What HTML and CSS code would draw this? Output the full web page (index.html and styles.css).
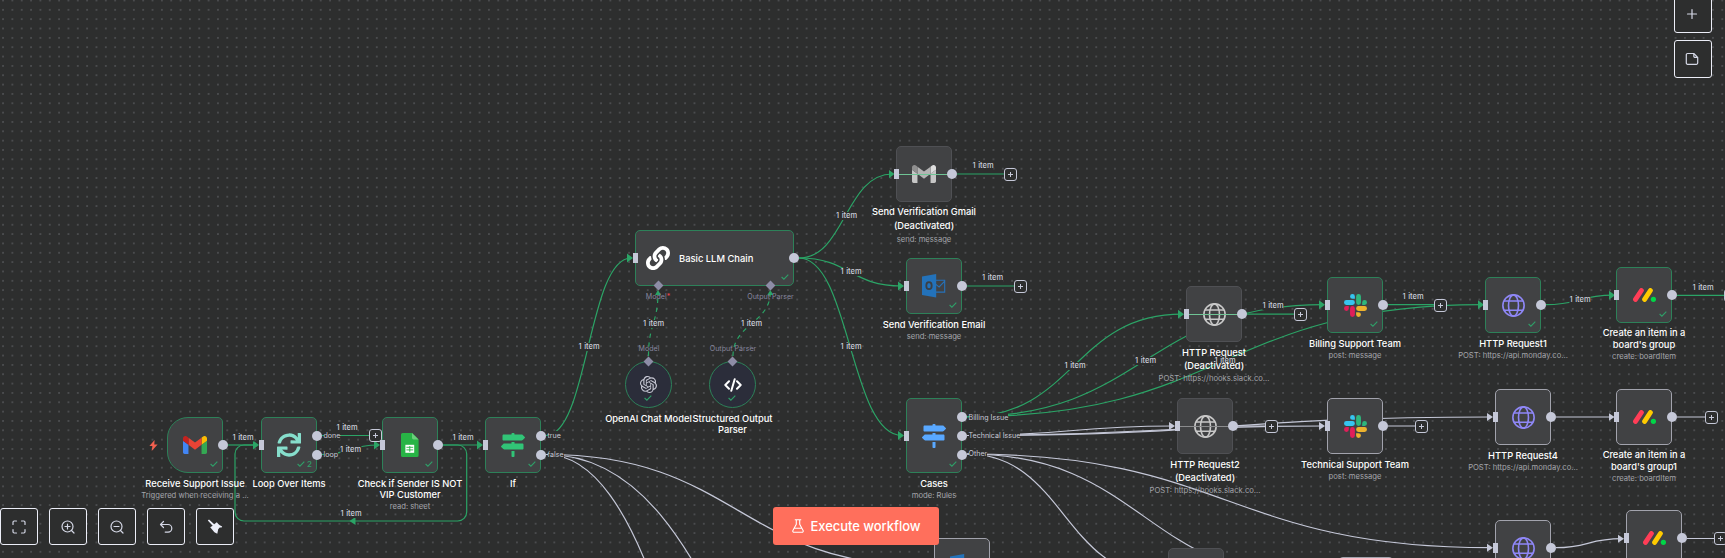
FILE: index.html
```html
<!DOCTYPE html>
<html lang="en">
<head>
<meta charset="utf-8">
<title>Support workflow</title>
<link rel="stylesheet" href="styles.css">
</head>
<body>
<svg class="defs" aria-hidden="true">
  <defs>
    <marker id="arrow-green" viewBox="0 0 6 10" refX="4" refY="5" markerWidth="6" markerHeight="10" markerUnits="userSpaceOnUse" orient="auto"><path d="M0 .5 6 5 0 9.5z" fill="#2ba466"/></marker>
    <marker id="arrow-grey" viewBox="0 0 6 10" refX="4" refY="5" markerWidth="6" markerHeight="10" markerUnits="userSpaceOnUse" orient="auto"><path d="M0 1 6 5 0 9z" fill="#c5c8d8"/></marker>
  </defs>
  <symbol id="gmail" viewBox="52 42 88 66"><path fill="#4285f4" d="M58 108h14V74L52 59v43c0 3.32 2.69 6 6 6"/><path fill="#34a853" d="M120 108h14c3.32 0 6-2.69 6-6V59l-20 15"/><path fill="#fbbc04" d="M120 48v26l20-15v-8c0-7.42-8.47-11.65-14.4-7.2"/><path fill="#ea4335" d="M72 74V48l24 18 24-18v26L96 92"/><path fill="#c5221f" d="M52 51v8l20 15V48l-5.6-4.2c-5.94-4.45-14.4-.22-14.4 7.2"/></symbol>
  <symbol id="gmail-mono" viewBox="52 42 88 66"><path fill="#c6c6c6" d="M58 108h14V74L52 59v43c0 3.32 2.69 6 6 6M120 108h14c3.32 0 6-2.69 6-6V59l-20 15"/><path fill="#dedede" d="M120 48v26l20-15v-8c0-7.42-8.47-11.65-14.4-7.2"/><path fill="#b4b4b4" d="M72 74V48l24 18 24-18v26L96 92"/><path fill="#8f8f8f" d="M52 51v8l20 15V48l-5.6-4.2c-5.94-4.45-14.4-.22-14.4 7.2"/></symbol>
  <symbol id="sync" viewBox="0 0 512 512"><path fill="currentColor" d="M440.65 12.57l4 82.77A247.16 247.16 0 0 0 255.83 8C134.73 8 33.91 94.92 12.29 209.82A12 12 0 0 0 24.09 224h49.05a12 12 0 0 0 11.67-9.26 175.91 175.91 0 0 1 317-56.94l-101.46-4.86a12 12 0 0 0-12.57 12v47.41a12 12 0 0 0 12 12H500a12 12 0 0 0 12-12V12a12 12 0 0 0-12-12h-47.37a12 12 0 0 0-11.98 12.57zM255.83 432a175.61 175.61 0 0 1-146-77.8l101.8 4.87a12 12 0 0 0 12.57-12v-47.4a12 12 0 0 0-12-12H12a12 12 0 0 0-12 12V500a12 12 0 0 0 12 12h47.35a12 12 0 0 0 12-12.6l-4.15-82.57A247.17 247.17 0 0 0 255.83 504c121.11 0 221.93-86.92 243.55-201.82a12 12 0 0 0-11.8-14.18h-49.05a12 12 0 0 0-11.67 9.26A175.86 175.86 0 0 1 255.83 432z"/></symbol>
  <symbol id="signs" viewBox="0 0 512 512"><path fill="currentColor" d="M507.31 84.69L464 41.37c-6-6-14.14-9.37-22.63-9.37H288V16c0-8.84-7.16-16-16-16h-32c-8.84 0-16 7.16-16 16v16H56c-13.25 0-24 10.75-24 24v80c0 13.25 10.75 24 24 24h385.37c8.49 0 16.62-3.37 22.63-9.37l43.31-43.31c6.25-6.26 6.25-16.38 0-22.63zM224 496c0 8.84 7.16 16 16 16h32c8.84 0 16-7.16 16-16V384h-64v112zm232-272H288v-32h-64v32H70.63c-8.49 0-16.62 3.37-22.63 9.37L4.69 276.69c-6.25 6.25-6.25 16.38 0 22.63L48 342.63c6 6 14.14 9.37 22.63 9.37H456c13.25 0 24-10.75 24-24v-80c0-13.25-10.75-24-24-24z"/></symbol>
  <symbol id="link" viewBox="0 0 512 512"><path fill="currentColor" d="M326.612 185.391c59.747 59.809 58.927 155.698.36 214.59-.11.12-.24.25-.36.37l-67.2 67.2c-59.27 59.27-155.699 59.262-214.96 0-59.27-59.26-59.27-155.7 0-214.96l37.106-37.106c9.84-9.84 26.786-3.3 27.294 10.606.648 17.722 3.826 35.527 9.69 52.721 1.986 5.822.567 12.262-3.783 16.612l-13.087 13.087c-28.026 28.026-28.905 73.66-1.155 101.96 28.024 28.579 74.086 28.749 102.325.51l67.2-67.19c28.191-28.191 28.073-73.757 0-101.83-3.701-3.694-7.429-6.564-10.341-8.569a16.037 16.037 0 0 1-6.947-12.606c-.396-10.567 3.348-21.456 11.698-29.806l21.054-21.055c5.521-5.521 14.182-6.199 20.584-1.731a152.482 152.482 0 0 1 20.522 17.197zM467.547 44.449c-59.261-59.262-155.69-59.27-214.96 0l-67.2 67.2c-.12.12-.25.25-.36.37-58.566 58.892-59.387 154.781.36 214.59a152.454 152.454 0 0 0 20.521 17.196c6.402 4.468 15.064 3.789 20.584-1.731l21.054-21.055c8.35-8.35 12.094-19.239 11.698-29.806a16.037 16.037 0 0 0-6.947-12.606c-2.912-2.005-6.64-4.875-10.341-8.569-28.073-28.073-28.191-73.639 0-101.83l67.2-67.19c28.239-28.239 74.3-28.069 102.325.51 27.75 28.3 26.872 73.934-1.155 101.96l-13.087 13.087c-4.35 4.35-5.769 10.79-3.783 16.612 5.864 17.194 9.042 34.999 9.69 52.721.509 13.906 17.454 20.446 27.294 10.606l37.106-37.106c59.271-59.259 59.271-155.699.001-214.959z"/></symbol>
  <symbol id="openai" viewBox="0 0 24 24"><path fill="currentColor" d="M22.2819 9.8211a5.9847 5.9847 0 0 0-.5157-4.9108 6.0462 6.0462 0 0 0-6.5098-2.9A6.0651 6.0651 0 0 0 4.9807 4.1818a5.9847 5.9847 0 0 0-3.9977 2.9 6.0462 6.0462 0 0 0 .7427 7.0966 5.98 5.98 0 0 0 .511 4.9107 6.051 6.051 0 0 0 6.5146 2.9001A5.9847 5.9847 0 0 0 13.2599 24a6.0557 6.0557 0 0 0 5.7718-4.2058 5.9894 5.9894 0 0 0 3.9977-2.9001 6.0557 6.0557 0 0 0-.7475-7.0729zm-9.022 12.6081a4.4755 4.4755 0 0 1-2.8764-1.0408l.1419-.0804 4.7783-2.7582a.7948.7948 0 0 0 .3927-.6813v-6.7369l2.02 1.1686a.071.071 0 0 1 .038.052v5.5826a4.504 4.504 0 0 1-4.4945 4.4944zm-9.6607-4.1254a4.4708 4.4708 0 0 1-.5346-3.0137l.142.0852 4.783 2.7582a.7712.7712 0 0 0 .7806 0l5.8428-3.3685v2.3324a.0804.0804 0 0 1-.0332.0615L9.74 19.9502a4.4992 4.4992 0 0 1-6.1408-1.6464zM2.3408 7.8956a4.485 4.485 0 0 1 2.3655-1.9728V11.6a.7664.7664 0 0 0 .3879.6765l5.8144 3.3543-2.0201 1.1685a.0757.0757 0 0 1-.071 0l-4.8303-2.7865A4.504 4.504 0 0 1 2.3408 7.872zm16.5963 3.8558L13.1038 8.364 15.1192 7.2a.0757.0757 0 0 1 .071 0l4.8303 2.7913a4.4944 4.4944 0 0 1-.6765 8.1042v-5.6772a.79.79 0 0 0-.407-.667zm2.0107-3.0231l-.142-.0852-4.7735-2.7818a.7759.7759 0 0 0-.7854 0L9.409 9.2297V6.8974a.0662.0662 0 0 1 .0284-.0615l4.8303-2.7866a4.4992 4.4992 0 0 1 6.6802 4.66zM8.3065 12.863l-2.02-1.1638a.0804.0804 0 0 1-.038-.0567V6.0742a4.4992 4.4992 0 0 1 7.3757-3.4537l-.142.0805L8.704 5.459a.7948.7948 0 0 0-.3927.6813zm1.0976-2.3654l2.602-1.4998 2.6069 1.4998v2.9994l-2.5974 1.4997-2.6067-1.4997Z"/></symbol>
  <symbol id="slack" viewBox="0 0 24 24"><path fill="#e01e5a" d="M5.042 15.165a2.528 2.528 0 0 1-2.52 2.523A2.528 2.528 0 0 1 0 15.165a2.527 2.527 0 0 1 2.522-2.52h2.52v2.52zM6.313 15.165a2.527 2.527 0 0 1 2.521-2.52 2.527 2.527 0 0 1 2.521 2.52v6.313A2.528 2.528 0 0 1 8.834 24a2.528 2.528 0 0 1-2.521-2.522v-6.313z"/><path fill="#36c5f0" d="M8.834 5.042a2.528 2.528 0 0 1-2.521-2.52A2.528 2.528 0 0 1 8.834 0a2.528 2.528 0 0 1 2.521 2.522v2.52H8.834zM8.834 6.313a2.528 2.528 0 0 1 2.521 2.521 2.528 2.528 0 0 1-2.521 2.521H2.522A2.528 2.528 0 0 1 0 8.834a2.528 2.528 0 0 1 2.522-2.521h6.312z"/><path fill="#2eb67d" d="M18.956 8.834a2.528 2.528 0 0 1 2.522-2.521A2.528 2.528 0 0 1 24 8.834a2.528 2.528 0 0 1-2.522 2.521h-2.522V8.834zM17.688 8.834a2.528 2.528 0 0 1-2.523 2.521 2.527 2.527 0 0 1-2.52-2.521V2.522A2.527 2.527 0 0 1 15.165 0a2.528 2.528 0 0 1 2.523 2.522v6.312z"/><path fill="#ecb22e" d="M15.165 18.956a2.528 2.528 0 0 1 2.523 2.522A2.528 2.528 0 0 1 15.165 24a2.527 2.527 0 0 1-2.52-2.522v-2.522h2.52zM15.165 17.688a2.527 2.527 0 0 1-2.52-2.523 2.526 2.526 0 0 1 2.52-2.52h6.313A2.527 2.527 0 0 1 24 15.165a2.528 2.528 0 0 1-2.522 2.523h-6.313z"/></symbol>
  <symbol id="globe" viewBox="0 0 24 24"><g fill="none" stroke="currentColor" stroke-width="1.7"><circle cx="12" cy="12" r="11.1"/><ellipse cx="12" cy="12" rx="5.2" ry="11.1"/><path d="M1.9 7.3h20.2M1.9 16.9h20.2"/></g></symbol>
  <symbol id="monday" viewBox="0 0 23 14"><g fill="none" stroke-width="4.9" stroke-linecap="round"><path stroke="#ff3d57" d="M2.5 11.4 8.4 2.5"/><path stroke="#ffcb00" d="M11.6 11.4 17.4 2.5"/></g><circle cx="20.4" cy="11.3" r="2.6" fill="#00d647"/></symbol>
  <symbol id="sheets" viewBox="0 0 18 24"><path fill="#28b446" d="M1.6 0H11l6.6 6.4v16a1.6 1.6 0 0 1-1.6 1.6H1.6A1.6 1.6 0 0 1 0 22.4V1.6A1.6 1.6 0 0 1 1.6 0z"/><path fill="#6ace7c" d="M11 0l6.6 6.4H12.600A1.6 1.6 0 0 1 11 4.8z"/><path fill="#fff" d="M4.4 11.800h8.8v8H4.400z"/><path stroke="#28b446" stroke-width=".9" d="M5.4 14.3h6.800M5.400 16.900h6.800M8.800 13v5.800"/></symbol>
  <symbol id="outlook" viewBox="0 0 24 24"><path fill="none" stroke="#2672b9" stroke-width="1.1" d="M13.500 6.300H22.700v11.800H13.500M13.800 10.400l3.300 2.500 5.400-5.600"/><path fill="#2372ba" d="M0 2.600 14.200 0v23.600L0 21z"/><ellipse cx="7" cy="11.700" rx="2.700" ry="3.500" fill="none" stroke="#3a3f45" stroke-width="1.8"/></symbol>
  <symbol id="code" viewBox="0 0 18 14"><path fill="none" stroke="currentColor" stroke-width="2" stroke-linecap="round" stroke-linejoin="round" d="M5 3.300 1.300 7 5 10.700M13 3.300 16.700 7 13 10.700M10.700 1.200 7.300 12.800"/></symbol>
  <symbol id="check" viewBox="0 0 8 6"><path fill="none" stroke="#2f9f68" stroke-width="1.1" d="M.6 3 2.900 5.200 7.300.6"/></symbol>
</svg>

<main class="canvas">
  <svg class="edges" width="1725" height="558" viewBox="0 0 1725 558">
    <g class="edge ok">
      <path d="M228 445H256"/>
      <path d="M443 445h14.700a9 9 0 0 1 9 9V512a9 9 0 0 1-9 9H244a9 9 0 0 1-9-9V454a9 9 0 0 1 9-9h13" marker-end="url(#arrow-green)"/>
      <path class="solid" d="M349.500 521l6-4v8z"/>
      <path d="M322 435.500H369"/>
      <path d="M322 454.500C349 454.500 349 445 378 445" marker-end="url(#arrow-green)"/>
      <path d="M443 445H481" marker-end="url(#arrow-green)"/>
      <path d="M546 435.500C588 435.500 588 258 631 258" marker-end="url(#arrow-green)"/>
      <path d="M799 258C845 258 845 174 892.500 174" marker-end="url(#arrow-green)"/>
      <path d="M799 258C850 258 850 286 902 286" marker-end="url(#arrow-green)"/>
      <path d="M799 258C850 258 850 435.500 902 435.500" marker-end="url(#arrow-green)"/>
      <path d="M957 174H1004M967 286H1014"/>
      <path d="M967 416.700C1074 416.700 1074 314.200 1182 314.200" marker-end="url(#arrow-green)"/>
      <path d="M967 416.700C1144.500 416.700 1144.500 304.700 1323 304.700" marker-end="url(#arrow-green)"/>
      <path d="M967 416.700C1224 416.700 1224 304.700 1482 304.700" marker-end="url(#arrow-green)"/>
      <path d="M1247 314.200H1294M1388 304.700H1435"/>
      <path d="M1546 304.700C1579 304.700 1579 295.200 1613 295.200" marker-end="url(#arrow-green)"/>
      <path d="M1677 295.400H1725"/>
      <path class="dash" d="M648.500 356C648.500 323.500 658 323.500 658 292"/>
      <path class="dash" d="M733 356C733 323.500 770.300 323.500 770.300 292"/>
      <path class="solid" d="M655 295l3-5 3 5zM767.300 295l3-5 3 5z"/>
    </g>
    <g class="edge idle">
      <path d="M546 454.500C738 454.500 738 566 929 566"/>
      <path d="M546 454.500C738 454.500 738 837 929 837"/>
      <path d="M546 454.500C738 454.500 738 1391 929 1391"/>
      <path d="M967 435.500C1070 435.500 1070 426 1173 426" marker-end="url(#arrow-grey)"/>
      <path d="M967 435.500C1145 435.500 1145 426 1323 426" marker-end="url(#arrow-grey)"/>
      <path d="M967 435.500C1228 435.500 1228 417 1491 417" marker-end="url(#arrow-grey)"/>
      <path d="M1238 426H1266M1388 426H1415"/>
      <path d="M967 454C1228 454 1228 547.700 1491 547.700" marker-end="url(#arrow-grey)"/>
      <path d="M967 454C1144 454 1144 579 1322 579"/>
      <path d="M967 454C1064 454 1064 576 1162 576"/>
      <path d="M1556 417H1612.500" marker-end="url(#arrow-grey)"/>
      <path d="M1677 417H1705M1687 538.500H1714"/>
      <path d="M1556 547.700C1588 547.700 1588 538.700 1622 538.700" marker-end="url(#arrow-grey)"/>
    </g>
  </svg>

  <span class="tag t1">1 item</span><span class="tag t2">1 item</span><span class="tag t3">1 item</span>
  <span class="tag t4">1 item</span><span class="tag t5">1 item</span><span class="tag t6">1 item</span>
  <span class="tag t7">1 item</span><span class="tag t8">1 item</span><span class="tag t9">1 item</span>
  <span class="tag t10">1 item</span><span class="tag t11">1 item</span><span class="tag t12">1 item</span>
  <span class="tag t13">1 item</span><span class="tag t14">1 item</span><span class="tag t15">1 item</span>
  <span class="tag t16">1 item</span><span class="tag t17">1 item</span><span class="tag t18">1 item</span>
  <span class="tag t19">1 item</span><span class="tag t20">1 item</span>

  <i class="plus p1"></i><i class="plus p2"></i><i class="plus p3"></i><i class="plus p4"></i><i class="plus p5"></i>
  <i class="plus p6"></i><i class="plus p7"></i><i class="plus p8"></i><i class="plus p9"></i><i class="plus p10"></i>

  <svg class="bolt" viewBox="0 0 9 11"><path fill="#f2604f" d="M5.600 0 .4 6h3L2.700 11 8.600 4.600H5.300z"/></svg>

  <section class="node ok trigger n-receive"><svg class="i-gmail"><use href="#gmail"/></svg><svg class="check"><use href="#check"/></svg><b class="out"></b>
    <div class="cap"><h3>Receive Support Issue</h3><p>Triggered when receiving a ...</p></div></section>
  <section class="node ok n-loop"><svg class="i24 teal"><use href="#sync"/></svg><svg class="check runs"><use href="#check"/></svg><em>2</em><b class="in"></b><b class="out o1"></b><b class="out o2"></b>
    <span class="port q1">done</span><span class="port q2">loop</span>
    <div class="cap"><h3>Loop Over Items</h3></div></section>
  <section class="node ok n-check"><svg class="i-sheets"><use href="#sheets"/></svg><svg class="check"><use href="#check"/></svg><b class="in"></b><b class="out"></b>
    <div class="cap"><h3>Check if Sender IS NOT<br>VIP Customer</h3><p>read: sheet</p></div></section>
  <section class="node ok n-if"><svg class="i24 green"><use href="#signs"/></svg><svg class="check"><use href="#check"/></svg><b class="in"></b><b class="out o1"></b><b class="out o2"></b>
    <span class="port q1">true</span><span class="port q2">false</span>
    <div class="cap"><h3>If</h3></div></section>

  <section class="node ok wide n-llm"><svg class="i24"><use href="#link"/></svg><strong>Basic LLM Chain</strong><svg class="check"><use href="#check"/></svg><b class="in"></b><b class="out"></b>
    <b class="dia d1"></b><b class="dia d2"></b></section>
  <span class="sub s1">Model<u>*</u></span><span class="sub s2">Output Parser</span>
  <section class="node ok round n-openai"><svg class="i-openai"><use href="#openai"/></svg><svg class="check"><use href="#check"/></svg><b class="dia top"></b>
    <div class="cap"><h3>OpenAI Chat Model</h3></div></section>
  <section class="node ok round n-parser"><svg class="i-code"><use href="#code"/></svg><svg class="check"><use href="#check"/></svg><b class="dia top"></b>
    <div class="cap"><h3>Structured Output<br>Parser</h3></div></section>
  <span class="sub s3">Model</span><span class="sub s4">Output Parser</span>

  <section class="node off n-sendgmail"><svg class="i-gmail"><use href="#gmail-mono"/></svg><b class="strike lit"></b><b class="in"></b><b class="out"></b>
    <div class="cap lh14"><h3>Send Verification Gmail<br>(Deactivated)</h3><p>send: message</p></div></section>
  <section class="node ok n-sendmail"><svg class="i24"><use href="#outlook"/></svg><svg class="check"><use href="#check"/></svg><b class="in"></b><b class="out"></b>
    <div class="cap"><h3>Send Verification Email</h3><p>send: message</p></div></section>
  <section class="node ok tall n-cases"><svg class="i24 blue"><use href="#signs"/></svg><svg class="check"><use href="#check"/></svg><b class="in"></b><b class="out o1"></b><b class="out"></b><b class="out o3"></b>
    <span class="port q1">Billing Issue</span><span class="port qm">Technical Issue</span><span class="port q3">Other</span>
    <div class="cap"><h3>Cases</h3><p>mode: Rules</p></div></section>

  <section class="node off n-http"><svg class="i23 pale"><use href="#globe"/></svg><b class="strike lit"></b><b class="in"></b><b class="out"></b>
    <div class="cap lh13"><h3>HTTP Request<br>(Deactivated)</h3><p>POST: https://hooks.slack.co...</p></div></section>
  <section class="node off n-http2"><svg class="i23 pale"><use href="#globe"/></svg><b class="strike"></b><b class="in"></b><b class="out"></b>
    <div class="cap lh13"><h3>HTTP Request2<br>(Deactivated)</h3><p>POST: https://hooks.slack.co...</p></div></section>
  <section class="node ok n-billing"><svg class="i23"><use href="#slack"/></svg><svg class="check"><use href="#check"/></svg><b class="in"></b><b class="out"></b>
    <div class="cap"><h3>Billing Support Team</h3><p>post: message</p></div></section>
  <section class="node n-tech"><svg class="i23"><use href="#slack"/></svg><b class="in"></b><b class="out"></b>
    <div class="cap"><h3>Technical Support Team</h3><p>post: message</p></div></section>
  <section class="node ok n-http1"><svg class="i23 violet"><use href="#globe"/></svg><svg class="check"><use href="#check"/></svg><b class="in"></b><b class="out"></b>
    <div class="cap"><h3>HTTP Request1</h3><p>POST: https://api.monday.co...</p></div></section>
  <section class="node n-http4"><svg class="i23 violet"><use href="#globe"/></svg><b class="in"></b><b class="out"></b>
    <div class="cap"><h3>HTTP Request4</h3><p>POST: https://api.monday.co...</p></div></section>
  <section class="node n-http5"><svg class="i23 violet"><use href="#globe"/></svg><b class="in"></b><b class="out"></b></section>
  <section class="node ok n-board"><svg class="i-monday"><use href="#monday"/></svg><svg class="check"><use href="#check"/></svg><b class="in"></b><b class="out"></b>
    <div class="cap lh12"><h3>Create an item in a<br>board's group</h3><p>create: boardItem</p></div></section>
  <section class="node n-board1"><svg class="i-monday"><use href="#monday"/></svg><b class="in"></b><b class="out"></b>
    <div class="cap lh12"><h3>Create an item in a<br>board's group1</h3><p>create: boardItem</p></div></section>
  <section class="node n-board2"><svg class="i-monday"><use href="#monday"/></svg><b class="in"></b><b class="out"></b></section>
  <section class="node n-mail2"><svg class="i24"><use href="#outlook"/></svg></section>
  <section class="node off n-off3"></section>
  <section class="node n-low"></section>

  <nav class="tools">
    <button><svg viewBox="0 0 16 16"><path d="M2 5.500V3.200A1.200 1.200 0 0 1 3.200 2h2.300M10.500 2h2.300A1.200 1.200 0 0 1 14 3.200v2.300M14 10.500v2.300a1.200 1.200 0 0 1-1.200 1.200h-2.300M5.500 14H3.200A1.200 1.200 0 0 1 2 12.800v-2.300"/></svg></button>
    <button><svg viewBox="0 0 16 16"><circle cx="7.500" cy="7.500" r="5.500"/><path d="M11.500 11.500 14 14M7.500 5v5M5 7.500h5"/></svg></button>
    <button><svg viewBox="0 0 16 16"><circle cx="7.500" cy="7.500" r="5.500"/><path d="M11.500 11.500 14 14M5 7.500h5"/></svg></button>
    <button><svg viewBox="0 0 16 16"><path d="M5.500 8.500 2.500 5.500l3-3M2.500 5.500H10a3.700 3.700 0 0 1 0 7.600H7.200"/></svg></button>
    <button><svg class="fill" viewBox="0 0 16 16"><path d="M.8 1.500 2 .4 7.200 5.200 9.800 3.200 11.300 5 12.800 6.300 15.200 7.600 14.600 8.600 12.700 8.500 11.200 10.200 10.300 14.700 7.400 13.200 3.200 8.200 5.700 6.700z"/></svg></button>
  </nav>
  <nav class="side">
    <button><svg viewBox="0 0 16 16"><path d="M8 3.500v9M3.500 8h9"/></svg></button>
    <button><svg viewBox="0 0 16 16"><path d="M3.500 2.500h6.300l3.900 3.900v5.700a1.200 1.200 0 0 1-1.200 1.200h-9A1.200 1.200 0 0 1 2.300 12.100V3.700a1.200 1.200 0 0 1 1.200-1.200zM9.800 2.700v2.500a1.200 1.200 0 0 0 1.200 1.200h2.500"/></svg></button>
  </nav>
  <button class="run"><svg viewBox="0 0 12 14"><path d="M3.200.7h5.600M4.300.7v4.600L.9 11.400a1.300 1.300 0 0 0 1.200 1.900h7.800a1.300 1.300 0 0 0 1.200-1.900L7.700 5.300V.7M2.500 9.200h7"/></svg>Execute workflow</button>
</main>
</body>
</html>
```
FILE: styles.css
```css
* { box-sizing: border-box; margin: 0; padding: 0; }
body { overflow: hidden; background: #2d2e2e; font-family: Inter, "Liberation Sans", sans-serif; color: #fff; }
.defs { position: absolute; width: 0; height: 0; }
.canvas {
  position: relative; width: 1725px; height: 558px; overflow: hidden;
  background-image: radial-gradient(circle at center, #64666a 0, #64666a .4px, transparent .95px);
  background-size: 9.354px 9.354px; background-position: -1.65px -4.2px;
}
.edges { position: absolute; left: 0; top: 0; }
.edge path { fill: none; stroke-width: 1.2; }
.edge.ok path { stroke: #2ba466; }
.edge.idle path { stroke: #c5c8d8; }
.edge .dash { stroke-dasharray: 4.5 4.5; }
.edge.ok .solid { fill: #2ba466; stroke: none; }

.node { position: absolute; width: 56px; height: 56px; border: 1px solid #a2a3ad; border-radius: 5px; background: #414244; display: flex; align-items: center; justify-content: center; }
.node.ok { border-color: #2d8159; }
.node.off { border-color: #4f5054; }
.node.tall { height: 75px; }
.node.wide { width: 159px; justify-content: flex-start; padding-left: 10px; gap: 9px; }
.node.trigger { border-radius: 21px 5px 5px 21px; }
.node.round { width: 47px; height: 47px; border-radius: 50%; background: #2b2d3a; }
.node strong { font-size: 9.4px; font-weight: 550; }
.node em { position: absolute; right: 4px; bottom: 3px; font: 500 8px Inter, sans-serif; color: #2f9f68; }
.i24 { width: 24px; height: 24px; }
.i23 { width: 23px; height: 23px; }
.i-gmail { width: 24px; height: 18px; }
.i-sheets { width: 18px; height: 24px; }
.i-openai { width: 17px; height: 17px; color: #c9cad6; }
.i-code { width: 18px; height: 14px; }
.i-monday { width: 23px; height: 14px; }
.teal { color: #86decc; } .green { color: #31c477; } .blue { color: #59a8ff; } .pale { color: #c8c8c8; } .violet { color: #8f87f7; }
.check { position: absolute; right: 4px; bottom: 5px; width: 8px; height: 6px; }
.check.runs { right: 11px; }
.round .check { right: 19px; bottom: 6px; }
.in, .out, .dia { position: absolute; background: #c5c8d8; }
.in { left: -3px; top: calc(50% - 5px); width: 5px; height: 10px; }
.out { right: -6px; top: calc(50% - 5px); width: 10px; height: 10px; border-radius: 50%; }
.o1 { top: 13px; } .o2 { top: 32px; } .o3 { top: 51px; }
.dia { width: 7px; height: 7px; background: #8d8ca6; transform: rotate(45deg); }
.d1 { left: 19px; bottom: -4px; } .d2 { left: 131px; bottom: -4px; }
.dia.top { left: 19px; top: -4.5px; }
.strike { position: absolute; left: 0; right: 0; top: calc(50% - .5px); height: 1.5px; background: #8a8b8d; }
.strike.lit { background: #6fc495; }
.port, .tag, .sub { position: absolute; white-space: nowrap; font-size: 7.1px; line-height: 9px; }
.port { left: 61.5px; color: #c9cbd8; background: #2d2e2e; }
.q1 { top: 12.5px; } .q2 { top: 31.5px; } .qm { top: 32px; } .q3 { top: 50px; }
.tall .q1 { top: 13.5px; }
.tag { transform: translate(-50%, -50%); color: #cccedb; font-size: 7.5px; font-weight: 500; word-spacing: .6px; background: #2d2e2e; line-height: 8px; }
.sub { transform: translate(-50%, -50%); color: #87869f; }
.sub u { color: #f0454d; text-decoration: none; }

.cap { position: absolute; left: 50%; top: 100%; transform: translateX(-50%); padding-top: 6px; text-align: center; white-space: nowrap; line-height: 11px; }
.cap h3 { font-size: 9.3px; font-weight: 550; }
.cap p { font-size: 7.65px; color: #a3a4aa; line-height: 13px; }
.lh14 { line-height: 14px; padding-top: 3.5px; }
.lh13 { line-height: 13px; padding-top: 4.5px; }
.lh12 { line-height: 12px; padding-top: 5px; }
.lh12 p { line-height: 12px; }

.plus { position: absolute; width: 13px; height: 13px; margin: -6.5px 0 0 -6.5px; border: 1.5px solid #c5c8d8; border-radius: 3px; background: linear-gradient(#c5c8d8, #c5c8d8) center/5px 1px no-repeat, linear-gradient(#c5c8d8, #c5c8d8) center/1px 5px no-repeat, #2d2e2e; }
.p1 { left: 375px; top: 435.5px; }
.p2 { left: 1010.5px; top: 174.5px; }
.p3 { left: 1020.5px; top: 286.5px; }
.p4 { left: 1300.5px; top: 314.5px; }
.p5 { left: 1440.5px; top: 305px; }
.p6 { left: 1271.5px; top: 426.5px; }
.p7 { left: 1421.5px; top: 426.5px; }
.p8 { left: 1711.5px; top: 417.5px; }
.p9 { left: 1720.5px; top: 538.5px; }
.p10 { left: 1730.5px; top: 295.5px; }
.bolt { position: absolute; left: 149px; top: 439.5px; width: 9px; height: 11px; }

.n-receive { left: 167px; top: 417px; }
.n-loop { left: 261px; top: 417px; }
.n-check { left: 382px; top: 417px; }
.n-if { left: 485px; top: 417px; }
.n-llm { left: 635px; top: 230px; }
.n-openai { left: 625px; top: 361px; }
.n-parser { left: 709px; top: 361px; }
.n-sendgmail { left: 896px; top: 146px; }
.n-sendmail { left: 906px; top: 258px; }
.n-cases { left: 906px; top: 398px; }
.n-http { left: 1186px; top: 286px; }
.n-http2 { left: 1177px; top: 398px; }
.n-billing { left: 1327px; top: 277px; }
.n-tech { left: 1327px; top: 398px; }
.n-http1 { left: 1485px; top: 277px; }
.n-http4 { left: 1495px; top: 389px; }
.n-http5 { left: 1495px; top: 520px; }
.n-board { left: 1616px; top: 267px; }
.n-board1 { left: 1616px; top: 389px; }
.n-board2 { left: 1626px; top: 510px; }
.n-mail2 { left: 934px; top: 538px; }
.n-off3 { left: 1168px; top: 548px; }
.n-low { left: 1338px; top: 557px; }

.t1 { left: 243px; top: 437.5px; } .t2 { left: 347px; top: 427.5px; } .t3 { left: 350.5px; top: 449.5px; }
.t4 { left: 463px; top: 437.5px; } .t5 { left: 351px; top: 513.5px; } .t6 { left: 589px; top: 346.5px; }
.t7 { left: 653.5px; top: 323.5px; } .t8 { left: 751.5px; top: 323.5px; } .t9 { left: 846.5px; top: 215.5px; }
.t10 { left: 851px; top: 271.5px; } .t11 { left: 851px; top: 346.5px; } .t12 { left: 983px; top: 165.5px; }
.t13 { left: 992.5px; top: 277.5px; } .t14 { left: 1075px; top: 365.5px; } .t15 { left: 1145.5px; top: 360.5px; }
.t16 { left: 1225px; top: 360.5px; } .t17 { left: 1273px; top: 305.5px; } .t18 { left: 1413px; top: 296.5px; }
.t19 { left: 1580px; top: 299.5px; } .t20 { left: 1703px; top: 287.5px; }
.s1 { left: 658px; top: 295.5px; } .s2 { left: 770.5px; top: 295.5px; } .s3 { left: 649px; top: 347.5px; } .s4 { left: 733px; top: 347.5px; }

button { font-family: inherit; }
.tools, .side { position: absolute; display: flex; }
.tools { left: 0; top: 508px; gap: 11px; }
.side { left: 1674px; top: -5px; flex-direction: column; gap: 7px; }
.tools button, .side button { width: 38px; height: 37px; border: 1px solid #eceef8; border-radius: 3px; background: #2d2e2e; display: flex; align-items: center; justify-content: center; }
.side button { height: 38px; }
.tools svg, .side svg { width: 16px; height: 16px; fill: none; stroke: #d5d8e6; stroke-width: 1.2; stroke-linecap: round; stroke-linejoin: round; }
.side svg { margin-right: 2px; }
.tools svg.fill { fill: #eceef8; stroke: none; }
.run { position: absolute; left: 773px; top: 507px; width: 166px; height: 38px; border: 0; border-radius: 3px; background: #ff6f5c; color: #fff; font-size: 13px; font-weight: 500; letter-spacing: -.05px; display: flex; align-items: center; justify-content: center; gap: 7px; }
.run svg { width: 12px; height: 14px; fill: none; stroke: #fff; stroke-width: 1.1; stroke-linecap: round; stroke-linejoin: round; }
```
